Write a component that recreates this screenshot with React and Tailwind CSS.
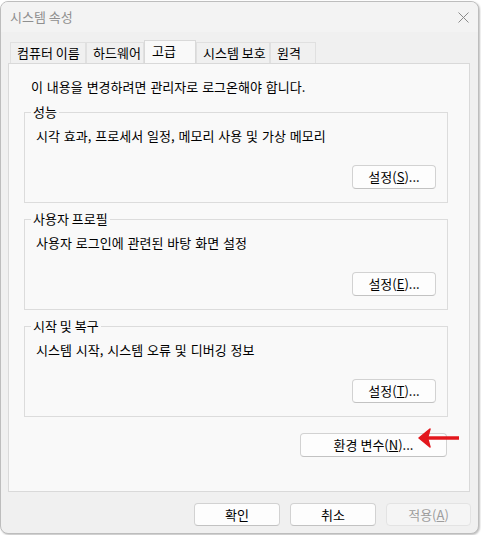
import React from "react";

const font = { fontFamily: '"Noto Sans CJK KR", "Noto Sans", sans-serif' };

function Btn({ children, className = "", disabled = false }) {
  return (
    <div
      className={
        "flex items-center justify-center rounded-[4px] border text-[13px] leading-[16px] " +
        (disabled
          ? "border-[#e3e3e3] bg-[#f5f5f5] text-[#9d9d9d] "
          : "border-[#d2d2d2] border-b-[#c2c2c2] bg-[#fdfdfd] text-black ") +
        className
      }
    >
      {children}
    </div>
  );
}

function Group({ title, desc, keyChar }) {
  return (
    <div className="relative ml-[15px] h-[91px] w-[424px] border border-[#dcdcdc]">
      <span className="absolute left-[6px] top-[-9px] bg-[#f9f9f9] px-[2px] text-[13px] leading-[16px] text-black">
        {title}
      </span>
      <div className="pl-[11px] pt-[15px] text-[13px] leading-[16px] text-black [word-spacing:1px]">{desc}</div>
      <div className="mt-[21px] flex justify-end pr-[11px]">
        <Btn className="h-[24px] w-[84px]">
          설정(<u>{keyChar}</u>)...
        </Btn>
      </div>
    </div>
  );
}

function Tab({ children, w, selected }) {
  return selected ? (
    <div
      className="relative z-10 -mb-px flex h-[23px] items-start border border-b-0 border-[#d9d9d9] bg-[#f9f9f9] pl-[7px] pt-[2px] text-[13px] leading-[16px] text-black"
      style={{ width: w }}
    >
      {children}
    </div>
  ) : (
    <div
      className="mt-[2px] flex h-[21px] items-center border border-b-0 border-[#e0e0e0] bg-[#f0f0f0] pl-[6px] text-[13px] leading-[16px] text-black"
      style={{ width: w }}
    >
      {children}
    </div>
  );
}

export default function App() {
  return (
    <div className="h-[535px] w-[481px] bg-white" style={font}>
      <div className="relative mt-[1px] h-[533px] w-[479px] overflow-hidden rounded-[8px] border border-[#bdbdbd] bg-[#f0f0f0] shadow-[1px_1px_2px_rgba(0,0,0,0.25)]">
        {/* title bar */}
        <div className="flex h-[30px] items-center justify-between bg-[#f3f3f3] pl-[9px] pr-[9px]">
          <span className="text-[13px] leading-[16px] text-[#8f8f8f]">시스템 속성</span>
          <svg width="11" height="11" viewBox="0 0 11 11">
            <path d="M0.5 0.5 L10.5 10.5 M10.5 0.5 L0.5 10.5" stroke="#8a8a8a" strokeWidth="1" fill="none" />
          </svg>
        </div>

        {/* tabs */}
        <div className="flex pl-[9px] pt-[8px]">
          <Tab w={76}>컴퓨터 이름</Tab>
          <Tab w={58}>하드웨어</Tab>
          <Tab w={52} selected>
            고급
          </Tab>
          <Tab w={74}>시스템 보호</Tab>
          <Tab w={46}>원격</Tab>
        </div>

        {/* panel */}
        <div className="ml-[7px] h-[429px] w-[462px] border border-[#d9d9d9] bg-[#f9f9f9]">
          <div className="pl-[22px] pt-[15px] text-[13px] leading-[16px] text-black [word-spacing:1px]">
            이 내용을 변경하려면 관리자로 로그온해야 합니다.
          </div>
          <div className="mt-[17px] flex flex-col gap-[16px]">
            <Group title="성능" desc="시각 효과, 프로세서 일정, 메모리 사용 및 가상 메모리" keyChar="S" />
            <Group title="사용자 프로필" desc="사용자 로그인에 관련된 바탕 화면 설정" keyChar="E" />
            <Group title="시작 및 복구" desc="시스템 시작, 시스템 오류 및 디버깅 정보" keyChar="T" />
          </div>
          <div className="mt-[16px] flex justify-end pr-[22px]">
            <Btn className="h-[24px] w-[147px]">
              환경 변수(<u>N</u>)...
            </Btn>
          </div>
        </div>

        {/* bottom buttons */}
        <div className="mt-[11px] flex justify-end gap-[10px] pr-[7px]">
          <Btn className="h-[23px] w-[86px]">확인</Btn>
          <Btn className="h-[23px] w-[86px]">취소</Btn>
          <Btn className="h-[23px] w-[85px]" disabled>
            적용(<u>A</u>)
          </Btn>
        </div>

        {/* red arrow annotation */}
        <svg
          className="absolute left-[417px] top-[425px]"
          width="42"
          height="22"
          viewBox="0 0 42 22"
        >
          <path d="M10 11 L41 11" stroke="#e3171d" strokeWidth="3.5" fill="none" />
          <path d="M1 11 L12 2 L9.5 11 L12 20 Z" fill="#e3171d" stroke="#e3171d" strokeWidth="1.5" strokeLinejoin="round" />
        </svg>
      </div>
    </div>
  );
}
